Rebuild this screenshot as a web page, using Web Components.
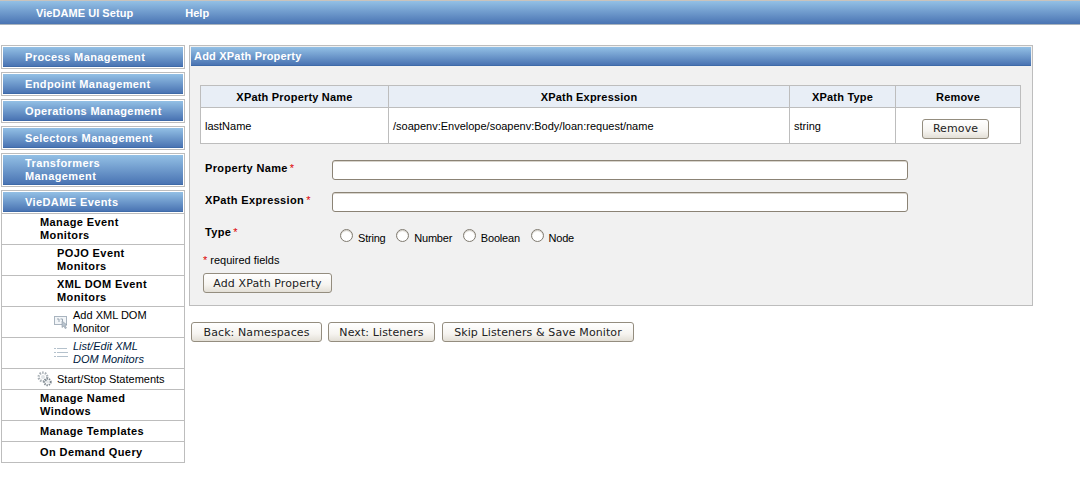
<!DOCTYPE html>
<html>
<head>
<meta charset="utf-8">
<title>VieDAME UI Setup</title>
<style>
  html, body { margin: 0; background: #fff; }
  body { font: 11px "Liberation Sans", Arial, sans-serif; color: #000; }
  #layout { display: flex; align-items: flex-start; gap: 4px; padding: 20px 0 0 1px; }
  #main { display: block; width: 844px; }
  #actions { display: flex; gap: 6px; margin: 16px 0 0 2px; }
  #actions ui-button:last-child { margin-left: 1px; }
</style>
</head>
<body>
<top-bar><span>VieDAME UI Setup</span><span>Help</span></top-bar>
<div id="layout">
  <side-nav>
    <nav-head>Process Management</nav-head>
    <nav-head>Endpoint Management</nav-head>
    <nav-head>Operations Management</nav-head>
    <nav-head>Selectors Management</nav-head>
    <nav-head>Transformers<br>Management</nav-head>
    <nav-group>
      <nav-head slot="title" flush>VieDAME Events</nav-head>
      <nav-item level="1" bold>Manage Event<br>Monitors</nav-item>
      <nav-item level="2" bold>POJO Event<br>Monitors</nav-item>
      <nav-item level="2" bold>XML DOM Event<br>Monitors</nav-item>
      <nav-item level="3" icon="add">Add XML DOM<br>Monitor</nav-item>
      <nav-item level="3" icon="list" italic>List/Edit XML<br>DOM Monitors</nav-item>
      <nav-item level="2" icon="gear">Start/Stop Statements</nav-item>
      <nav-item level="1" bold>Manage Named<br>Windows</nav-item>
      <nav-item level="1" bold>Manage Templates</nav-item>
      <nav-item level="1" bold>On Demand Query</nav-item>
    </nav-group>
  </side-nav>
  <div id="main">
    <form-panel heading="Add XPath Property">
      <xpath-table></xpath-table>
      <form-row label="Property Name"><text-field></text-field></form-row>
      <form-row label="XPath Expression"><text-field></text-field></form-row>
      <form-row label="Type" type>
        <radio-opt>String</radio-opt>
        <radio-opt>Number</radio-opt>
        <radio-opt>Boolean</radio-opt>
        <radio-opt>Node</radio-opt>
      </form-row>
      <required-note></required-note>
      <ui-button style="--w:129px">Add XPath Property</ui-button>
    </form-panel>
    <div id="actions">
      <ui-button style="--w:131px">Back: Namespaces</ui-button>
      <ui-button style="--w:107px">Next: Listeners</ui-button>
      <ui-button style="--w:192px">Skip Listeners &amp; Save Monitor</ui-button>
    </div>
  </div>
</div>

<script>
const BLUE = 'linear-gradient(#93c0e5, #4a74b3)';

class TopBar extends HTMLElement {
  connectedCallback() {
    this.attachShadow({mode: 'open'}).innerHTML = `
      <style>
        :host {
          display: flex;
          gap: 52px;
          box-sizing: border-box;
          height: 25px;
          padding: 1px 0 0 36px;
          background: ${BLUE};
          border-top: 1px solid #c9c3bc;
          border-bottom: 1px solid #a9b3bd;
          color: #fff;
          font: bold 11px/22px "Liberation Sans", Arial, sans-serif;
          letter-spacing: .05px;
        }
      </style>
      <slot></slot>`;
  }
}

class SideNav extends HTMLElement {
  connectedCallback() {
    this.attachShadow({mode: 'open'}).innerHTML = `
      <style>
        :host { display: flex; flex-direction: column; gap: 3px; width: 184px; flex: none; }
      </style>
      <slot></slot>`;
  }
}

class NavHead extends HTMLElement {
  connectedCallback() {
    this.attachShadow({mode: 'open'}).innerHTML = `
      <style>
        :host {
          display: block;
          border: 1px solid #bdbdbd;
          padding: 1px;
        }
        :host([flush]) { border: 0; padding: 1px 1px 0; }
        div {
          display: flex;
          align-items: center;
          box-sizing: border-box;
          min-height: 20px;
          background: ${BLUE};
          color: #fff;
          font: bold 11px/13px "Liberation Sans", Arial, sans-serif;
          letter-spacing: .4px;
          padding: 2px 8px 1px 22px;
          border-bottom: 1px solid #3e6aa8;
        }
      </style>
      <div><span><slot></slot></span></div>`;
  }
}

class NavGroup extends HTMLElement {
  connectedCallback() {
    this.attachShadow({mode: 'open'}).innerHTML = `
      <style>
        :host { display: block; border: 1px solid #bdbdbd; }
        .items { margin-top: 1px; border-top: 1px solid #bdbdbd; }
        ::slotted(nav-item:not(:first-of-type)) { border-top: 1px solid #bdbdbd; }
      </style>
      <slot name="title"></slot>
      <div class="items"><slot></slot></div>`;
  }
}

const ICONS = {
  add: `<svg width="16" height="16" viewBox="0 0 16 16" fill="none">
      <rect x="1.5" y="2.5" width="12" height="8" fill="#f2f5f8" stroke="#a9b4bf"/>
      <path d="M4 5h2v3M7.500 5h2v2" stroke="#9aa7b3"/>
      <path d="M9 7l5 4-2 .5 1.500 2.500-1.500 .5-1-2.500-2 1.500z" fill="#b9c4ce" stroke="#8d99a5" stroke-width=".6"/>
    </svg>`,
  list: `<svg width="16" height="16" viewBox="0 0 16 16" fill="none" stroke="#b4c1cc">
      <path d="M1 3.500h2M1 7.500h2M1 11.500h2M4 3.500h10M4 7.500h11M4 11.500h11"/>
    </svg>`,
  gear: `<svg width="16" height="16" viewBox="0 0 16 16">
      <circle cx="6" cy="6" r="4.300" fill="none" stroke="#a9b0b6" stroke-width="2.400" stroke-dasharray="1.500 1.200"/>
      <circle cx="6" cy="6" r="2" fill="#dfe3e6"/>
      <circle cx="10.500" cy="11" r="3.200" fill="none" stroke="#7d878f" stroke-width="2" stroke-dasharray="1.300 1"/>
      <circle cx="10.500" cy="11" r="1.300" fill="#e3e6e8"/>
    </svg>`
};

class NavItem extends HTMLElement {
  connectedCallback() {
    const icon = ICONS[this.getAttribute('icon')] || '';
    this.attachShadow({mode: 'open'}).innerHTML = `
      <style>
        :host {
          display: flex;
          align-items: center;
          box-sizing: border-box;
          min-height: 21px;
          padding: 2px 8px 2px 38px;
          font: 11px/13px "Liberation Sans", Arial, sans-serif;
        }
        :host([level="2"]) { padding-left: 55px; }
        :host([level="3"]) { padding-left: 71px; }
        :host([bold]) { font-weight: bold; letter-spacing: .4px; }
        :host([italic]) { font-style: italic; color: #001a40; }
        .ic { position: absolute; width: 16px; height: 16px; margin-left: -20px; }
      </style>
      ${icon ? `<span class="ic">${icon}</span>` : ''}
      <span><slot></slot></span>`;
  }
}

class FormPanel extends HTMLElement {
  connectedCallback() {
    this.attachShadow({mode: 'open'}).innerHTML = `
      <style>
        :host {
          display: block;
          box-sizing: border-box;
          height: 261px;
          background: #f1f1f1;
          border: 1px solid #bdbdbd;
          padding: 1px;
        }
        h2 {
          margin: 0;
          height: 19px;
          box-sizing: border-box;
          padding-left: 3px;
          background: ${BLUE};
          border-bottom: 1px solid #3e6aa8;
          color: #fff;
          font: bold 11px/18px "Liberation Sans", Arial, sans-serif;
          letter-spacing: .2px;
        }
        .body { padding: 19px 10px 0 9px; }
        ::slotted(ui-button) { margin: 6px 0 0 3px; }
      </style>
      <h2>${this.getAttribute('heading')}</h2>
      <div class="body"><slot></slot></div>`;
  }
}

class XpathTable extends HTMLElement {
  connectedCallback() {
    this.attachShadow({mode: 'open'}).innerHTML = `
      <style>
        :host { display: block; margin-bottom: 16px; }
        table { border-collapse: collapse; table-layout: fixed; width: 821px; background: #fff; }
        th, td { border: 1px solid #bdbdbd; padding: 0 4px; font-size: 11px; }
        th { height: 21px; background: #e8eef6; font-weight: bold; letter-spacing: .2px; text-align: center; }
        td { height: 35px; }
        td.c { text-align: center; padding: 6px 9px 0 4px; height: 29px; --w: 67px; }
      </style>
      <table>
        <colgroup><col style="width:188px"><col style="width:401px"><col style="width:106px"><col style="width:125px"></colgroup>
        <tr><th>XPath Property Name</th><th>XPath Expression</th><th>XPath Type</th><th>Remove</th></tr>
        <tr>
          <td>lastName</td>
          <td>/soapenv:Envelope/soapenv:Body/loan:request/name</td>
          <td>string</td>
          <td class="c"><ui-button>Remove</ui-button></td>
        </tr>
      </table>`;
  }
}

class FormRow extends HTMLElement {
  connectedCallback() {
    this.attachShadow({mode: 'open'}).innerHTML = `
      <style>
        :host {
          display: grid;
          grid-template-columns: 127px auto;
          height: 32px;
          margin-left: 5px;
        }
        label { font-weight: bold; line-height: 16px; letter-spacing: .35px; }
        i { margin-left: 2px; color: #d00; font-style: normal; font-weight: normal; letter-spacing: 0; }
        .f { display: flex; align-items: flex-start; }
        :host([type]) .f { padding: 5px 0 0 8px; }
        :host([type]) { height: 30px; }
      </style>
      <label>${this.getAttribute('label')}<i>*</i></label>
      <div class="f"><slot></slot></div>`;
  }
}

class TextField extends HTMLElement {
  connectedCallback() {
    this.attachShadow({mode: 'open'}).innerHTML = `
      <style>
        :host { display: block; }
        input {
          display: block;
          box-sizing: border-box;
          width: 576px;
          height: 20px;
          margin: 0;
          background: #fff;
          border: 1px solid #8b8375;
          border-radius: 3px;
          box-shadow: inset 0 1px 0 #d8d4cc;
          outline: 0;
        }
      </style>
      <input type="text">`;
  }
}

class RadioOpt extends HTMLElement {
  connectedCallback() {
    this.attachShadow({mode: 'open'}).innerHTML = `
      <style>
        :host { display: flex; align-items: flex-start; margin-right: 10.700px; font-size: 11px; letter-spacing: -.2px; }
        b {
          display: block;
          box-sizing: border-box;
          width: 13px;
          height: 13px;
          margin-right: 5px;
          background: #fff;
          border: 1px solid #7f7a70;
          border-radius: 50%;
          box-shadow: inset 0 1px 1px #cfcbc3;
        }
        span { padding-top: 3px; line-height: 13px; }
      </style>
      <b></b><span><slot></slot></span>`;
  }
}

class RequiredNote extends HTMLElement {
  connectedCallback() {
    this.attachShadow({mode: 'open'}).innerHTML = `
      <style>
        :host { display: block; margin-left: 3px; line-height: 13px; }
        i { color: #d00; font-style: normal; }
      </style>
      <i>*</i> required fields`;
  }
}

class UiButton extends HTMLElement {
  connectedCallback() {
    this.attachShadow({mode: 'open'}).innerHTML = `
      <style>
        :host { display: inline-block; vertical-align: top; }
        button {
          display: block;
          box-sizing: border-box;
          width: var(--w, auto);
          height: 20px;
          margin: 0;
          padding: 0;
          border: 1px solid #948d7f;
          border-radius: 3px;
          background: linear-gradient(#fff, #f6f4f0 60%, #e3dfd6);
          color: #222;
          font: 11px/17px "DejaVu Sans", Verdana, sans-serif;
          letter-spacing: .1px;
          white-space: nowrap;
        }
      </style>
      <button type="button"><slot></slot></button>`;
  }
}

customElements.define('top-bar', TopBar);
customElements.define('side-nav', SideNav);
customElements.define('nav-head', NavHead);
customElements.define('nav-group', NavGroup);
customElements.define('nav-item', NavItem);
customElements.define('form-panel', FormPanel);
customElements.define('xpath-table', XpathTable);
customElements.define('form-row', FormRow);
customElements.define('text-field', TextField);
customElements.define('radio-opt', RadioOpt);
customElements.define('required-note', RequiredNote);
customElements.define('ui-button', UiButton);
</script>
</body>
</html>
